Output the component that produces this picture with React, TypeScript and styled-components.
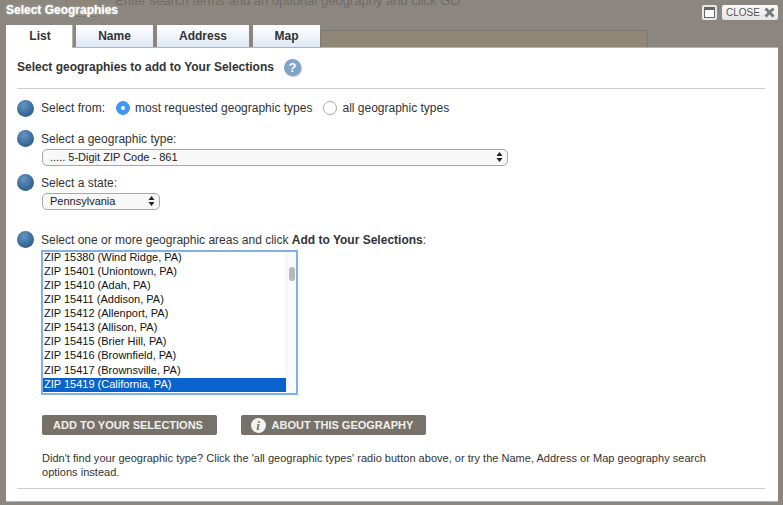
import React from 'react';
import styled, { createGlobalStyle } from 'styled-components';

const GlobalStyle = createGlobalStyle`
  html, body {
    margin: 0;
    padding: 0;
    background: #8b8780;
    font-family: 'Liberation Sans', Arial, sans-serif;
    overflow: hidden;
  }
`;

const zips = [
  'ZIP 15380 (Wind Ridge, PA)',
  'ZIP 15401 (Uniontown, PA)',
  'ZIP 15410 (Adah, PA)',
  'ZIP 15411 (Addison, PA)',
  'ZIP 15412 (Allenport, PA)',
  'ZIP 15413 (Allison, PA)',
  'ZIP 15415 (Brier Hill, PA)',
  'ZIP 15416 (Brownfield, PA)',
  'ZIP 15417 (Brownsville, PA)',
  'ZIP 15419 (California, PA)',
];

const tabs = [
  { label: 'List', width: 66 },
  { label: 'Name', width: 77 },
  { label: 'Address', width: 92 },
  { label: 'Map', width: 67 },
];

const SelectArrows = () => (
  <svg width="7" height="12" viewBox="0 0 7 12">
    <path d="M3.5 1 L6.5 5 H0.5 Z M3.5 11 L0.5 7 H6.5 Z" fill="#222" />
  </svg>
);

const App = () => {
  return (
    <Page>
      <GlobalStyle />
      <BehindIcon />
      <BehindText>Enter search terms and an optional geography and click GO</BehindText>
      <BehindBox />
      <Header>
        <Title>Select Geographies</Title>
        <WindowButton>
          <svg width="11" height="11" viewBox="0 0 11 11">
            <rect x="0.5" y="0.5" width="10" height="10" fill="#fff" stroke="#666" />
            <rect x="1" y="1" width="9" height="2" fill="#666" />
          </svg>
        </WindowButton>
        <CloseButton>
          CLOSE
          <svg width="11" height="11" viewBox="0 0 11 11">
            <path d="M1.5 1.5 L9.5 9.5 M9.5 1.5 L1.5 9.5" stroke="#777" strokeWidth="2.8" />
          </svg>
        </CloseButton>
      </Header>
      <TabRow>
        {tabs.map((tab, i) => (
          <Tab key={tab.label} $active={i === 0} $width={tab.width}>
            {tab.label}
          </Tab>
        ))}
      </TabRow>
      <Panel>
        <HeadingRow>
          <Heading>Select geographies to add to Your Selections</Heading>
          <HelpIcon>?</HelpIcon>
        </HeadingRow>
        <Rule $top={12} />
        <RadioRow>
          <Bullet />
          <span>Select from:</span>
          <RadioGroup>
            <Radio $checked />
            <span>most requested geographic types</span>
          </RadioGroup>
          <RadioGroup>
            <Radio />
            <span>all geographic types</span>
          </RadioGroup>
        </RadioRow>
        <Field $top={13}>
          <Bullet />
          <FieldBody>
            <span>Select a geographic type:</span>
            <SelectBox $width={466}>
              <span>..... 5-Digit ZIP Code - 861</span>
              <SelectArrows />
            </SelectBox>
          </FieldBody>
        </Field>
        <Field $top={8}>
          <Bullet />
          <FieldBody>
            <span>Select a state:</span>
            <SelectBox $width={118}>
              <span>Pennsylvania</span>
              <SelectArrows />
            </SelectBox>
          </FieldBody>
        </Field>
        <Field $top={21}>
          <Bullet />
          <FieldBody>
            <span>
              Select one or more geographic areas and click <b>Add to Your Selections</b>:
            </span>
            <ListBox>
              <ListItems>
                {zips.map((zip, i) => (
                  <ListItem key={zip} $selected={i === zips.length - 1}>
                    {zip}
                  </ListItem>
                ))}
              </ListItems>
              <ScrollTrack>
                <ScrollThumb />
              </ScrollTrack>
            </ListBox>
          </FieldBody>
        </Field>
        <ButtonRow>
          <ActionButton $width={175}>ADD TO YOUR SELECTIONS</ActionButton>
          <ActionButton $width={185}>
            <InfoIcon>i</InfoIcon>
            ABOUT THIS GEOGRAPHY
          </ActionButton>
        </ButtonRow>
        <Note>
          Didn't find your geographic type? Click the 'all geographic types' radio button above, or try the Name,
          Address or Map geography search options instead.
        </Note>
        <Rule $top={9} />
      </Panel>
    </Page>
  );
};

export default App;

const Page = styled.div`
  position: relative;
  width: 783px;
  height: 505px;
  padding: 0 5px 0 6px;
  box-sizing: border-box;
  background: #8b8780;
  overflow: hidden;
`;

const BehindIcon = styled.div`
  position: absolute;
  left: 66px;
  top: -1px;
  width: 34px;
  height: 18px;
  box-sizing: border-box;
  background: #8f8678;
  border: 1px solid #7f7a70;
  border-radius: 2px;
`;

const BehindText = styled.div`
  position: absolute;
  left: 115px;
  top: -7px;
  font-size: 13px;
  line-height: 15px;
  color: #6f6c66;
  white-space: nowrap;
`;

const BehindBox = styled.div`
  position: absolute;
  left: 320px;
  top: 30px;
  width: 328px;
  height: 20px;
  box-sizing: border-box;
  background: #8f8678;
  border: 1px solid #7f7a70;
`;

const Header = styled.div`
  position: relative;
  display: flex;
  align-items: center;
  height: 25px;
`;

const Title = styled.div`
  flex: 1;
  font-size: 12px;
  font-weight: bold;
  color: #fff;
  margin-bottom: 5px;
  text-shadow: 0 0 2px #ddd;
`;

const WindowButton = styled.div`
  display: flex;
  align-items: center;
  justify-content: center;
  width: 15px;
  height: 15px;
  margin-right: 5px;
  background: #e8e8e8;
  border-radius: 2px;
`;

const CloseButton = styled.div`
  display: flex;
  align-items: center;
  justify-content: space-between;
  width: 56px;
  height: 15px;
  box-sizing: border-box;
  padding: 0 3px 0 4px;
  font-size: 10px;
  color: #555;
  background: linear-gradient(#fafafa, #e4e4e4);
  border-radius: 2px;
`;

const TabRow = styled.div`
  position: relative;
  display: flex;
  gap: 4px;
  height: 22px;
`;

const Tab = styled.div<{ $active?: boolean; $width: number }>`
  width: ${(p) => p.$width}px;
  height: ${(p) => (p.$active ? 23 : 22)}px;
  padding-left: ${(p) => (p.$active ? 2 : 0)}px;
  line-height: 22px;
  box-sizing: border-box;
  text-align: center;
  font-size: 12px;
  font-weight: bold;
  color: #333;
  background: ${(p) => (p.$active ? '#fff' : 'linear-gradient(#fff, #dfe9f5)')};
  box-shadow: ${(p) => (p.$active ? '1px 0 0 #b5b2ac' : 'none')};
  z-index: ${(p) => (p.$active ? 2 : 0)};
`;

const Panel = styled.div`
  position: relative;
  height: 455px;
  box-sizing: border-box;
  padding: 10px 13px 0 11px;
  background: #fff;
  border-top: 1px solid #b5b2ac;
  border-bottom: 1px solid #b5b2ac;
  font-size: 12px;
  color: #333;
`;

const HeadingRow = styled.div`
  display: flex;
  align-items: center;
  gap: 10px;
  height: 18px;
`;

const Heading = styled.div`
  font-size: 12px;
  font-weight: bold;
  color: #333;
`;

const HelpIcon = styled.div`
  width: 17px;
  height: 17px;
  border-radius: 50%;
  background: #7fa3c9;
  color: #fff;
  font-size: 13px;
  font-weight: bold;
  line-height: 17px;
  text-align: center;
  box-shadow: 1px 1px 1px #bbb;
`;

const Rule = styled.div<{ $top: number }>`
  height: 1px;
  background: #ccc;
  margin-top: ${(p) => p.$top}px;
`;

const Bullet = styled.div`
  flex: none;
  width: 17px;
  height: 17px;
  border-radius: 50%;
  background: radial-gradient(circle at 40% 30%, #6394c2, #285887 85%);
`;

const RadioRow = styled.div`
  display: flex;
  align-items: center;
  gap: 7px;
  margin-top: 10px;
  height: 18px;
`;

const RadioGroup = styled.div`
  display: flex;
  align-items: center;
  gap: 5px;
  margin-left: 4px;
`;

const Radio = styled.div<{ $checked?: boolean }>`
  position: relative;
  width: 14px;
  height: 14px;
  box-sizing: border-box;
  border-radius: 50%;
  background: ${(p) => (p.$checked ? '#3f97f5' : '#fff')};
  border: 1px solid ${(p) => (p.$checked ? '#3f97f5' : '#aaa')};

  &::after {
    content: '';
    display: ${(p) => (p.$checked ? 'block' : 'none')};
    position: absolute;
    left: 4px;
    top: 4px;
    width: 4px;
    height: 4px;
    border-radius: 50%;
    background: #fff;
  }
`;

const Field = styled.div<{ $top: number }>`
  display: flex;
  align-items: flex-start;
  gap: 7px;
  margin-top: ${(p) => p.$top}px;
`;

const FieldBody = styled.div`
  display: flex;
  flex-direction: column;
  align-items: flex-start;
  padding-top: 2px;
  line-height: 14px;
  gap: 3px;
`;

const SelectBox = styled.div<{ $width: number }>`
  display: flex;
  align-items: center;
  justify-content: space-between;
  width: ${(p) => p.$width}px;
  height: 17px;
  margin-left: 1px;
  box-sizing: border-box;
  padding: 0 4px 2px 7px;
  font-size: 11px;
  color: #222;
  background: #f8f8f8;
  border: 1px solid #a8a8a8;
  border-radius: 5px;
`;

const ListBox = styled.div`
  display: flex;
  width: 257px;
  height: 145px;
  box-sizing: border-box;
  background: #fff;
  border: 2px solid #7fb0ea;
  overflow: hidden;
`;

const ListItems = styled.div`
  width: 243px;
  margin-top: -1px;
`;

const ListItem = styled.div<{ $selected?: boolean }>`
  height: 14.07px;
  line-height: 12.07px;
  padding: 0 1px 2px;
  box-sizing: border-box;
  font-size: 11px;
  white-space: nowrap;
  color: ${(p) => (p.$selected ? '#fff' : '#111')};
  background: ${(p) => (p.$selected ? '#0a63cc' : 'transparent')};
`;

const ScrollTrack = styled.div`
  flex: 1;
  padding: 15px 0 0 2px;
  background: #fafafa;
  border-left: 1px solid #eee;
`;

const ScrollThumb = styled.div`
  width: 6px;
  height: 14px;
  border-radius: 3px;
  background: #b8b8b8;
`;

const ButtonRow = styled.div`
  display: flex;
  gap: 24px;
  margin: 20px 0 0 25px;
`;

const ActionButton = styled.div<{ $width: number }>`
  display: flex;
  align-items: center;
  justify-content: center;
  gap: 6px;
  width: ${(p) => p.$width}px;
  height: 20px;
  padding-right: 3px;
  box-sizing: border-box;
  border-radius: 2px;
  background: #76726a;
  color: #f0f0ee;
  font-size: 11px;
  font-weight: bold;
  white-space: nowrap;
`;

const InfoIcon = styled.span`
  width: 15px;
  height: 15px;
  border-radius: 50%;
  background: #f2f2f0;
  color: #76726a;
  font-family: 'Liberation Serif', serif;
  font-style: italic;
  font-size: 13px;
  font-weight: bold;
  line-height: 15px;
  text-align: center;
`;

const Note = styled.div`
  margin: 16px 0 0 25px;
  width: 690px;
  font-size: 11px;
  letter-spacing: 0.02px;
  line-height: 14px;
  color: #333;
`;
